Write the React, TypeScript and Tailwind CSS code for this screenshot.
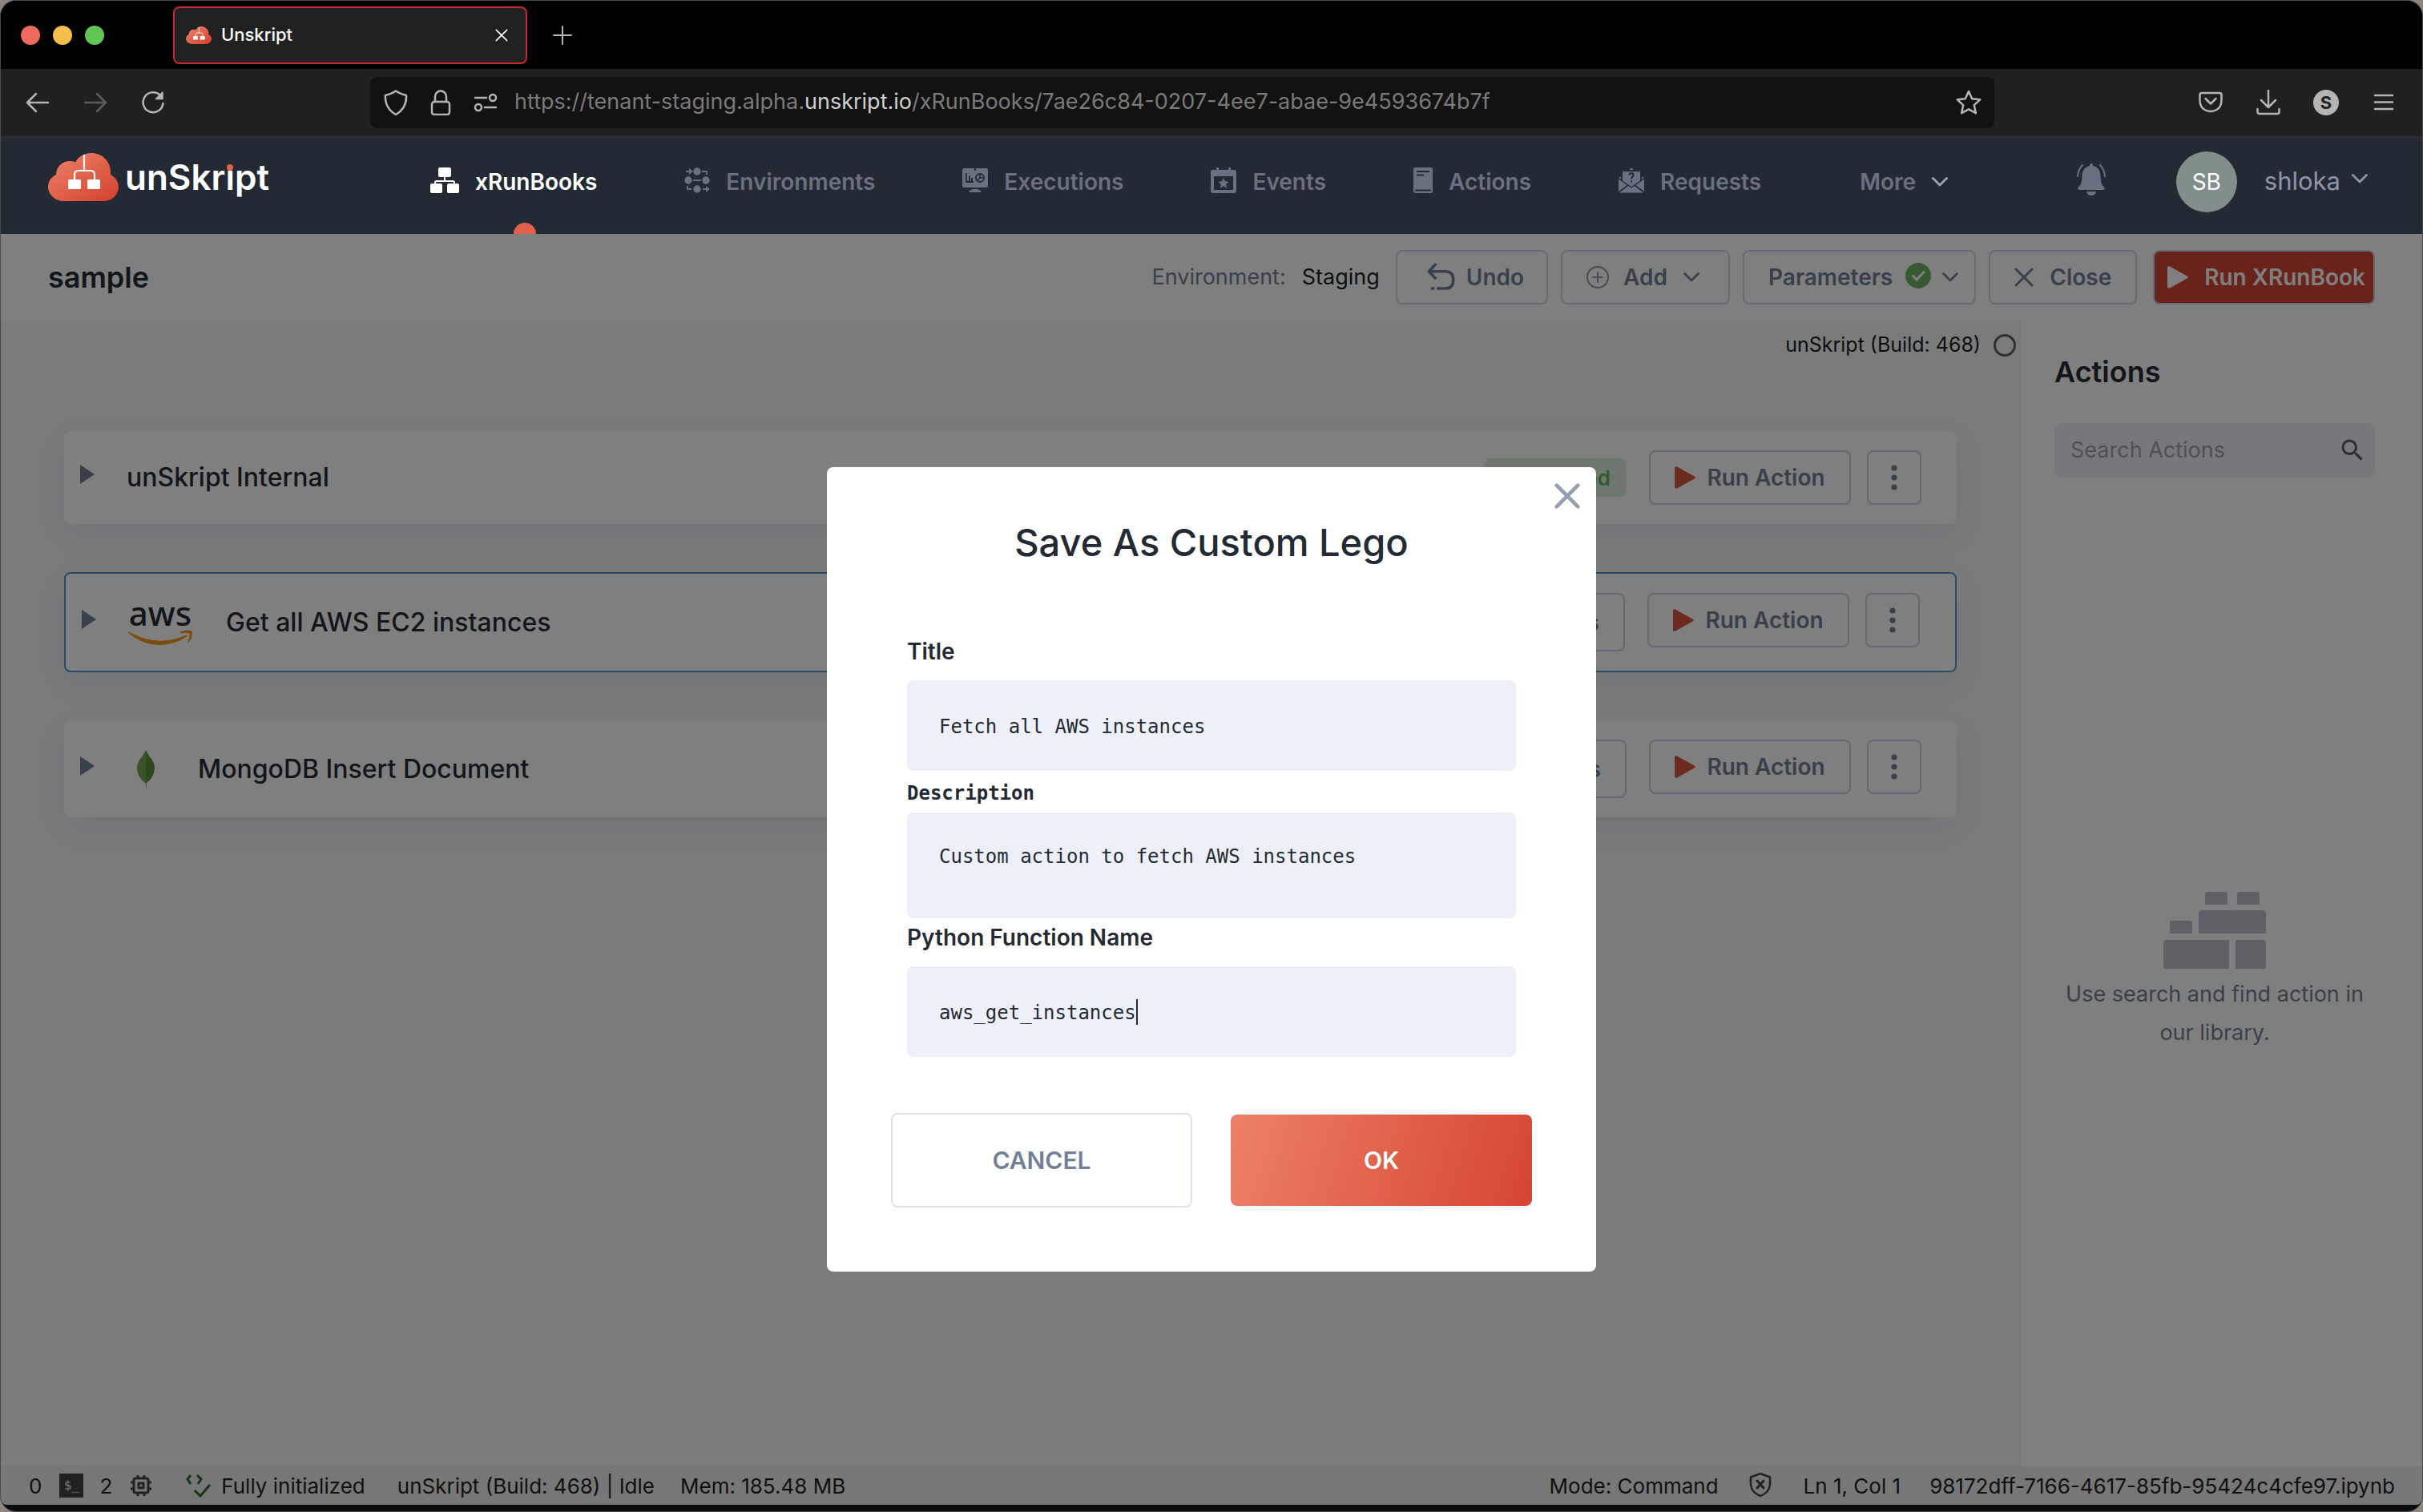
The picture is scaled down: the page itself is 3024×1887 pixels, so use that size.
import React, { useState } from "react";

type IconProps = { className?: string };

function CloudLogo({ className, id }: { className?: string; id: string }) {
  return (
    <svg viewBox="0 0 88 60" className={className} aria-hidden="true">
      <defs>
        <linearGradient id={id} x1="0" y1="0" x2="1" y2="1">
          <stop offset="0.1" stopColor="#ec7d65" />
          <stop offset="0.9" stopColor="#d54733" />
        </linearGradient>
      </defs>
      <path
        fill={`url(#${id})`}
        d="M20 60C9 60 0 52 0 42c0-7 4-12 10-15C10 17 18 10 27 10c3 0 5 .5 7 1.500C38 4 46 0 54 0c13 0 24 10 24 23v4c6 3 10 9 10 15 0 10-8 18-19 18Z"
      />
      <path d="M45 2v20M33 34v-7q0-5 5-5h15q5 0 5 5v7" fill="none" stroke="#fff" strokeWidth="2.200" />
      <rect x="25" y="33" width="16" height="12" rx="1.500" fill="#fff" />
      <rect x="49" y="33" width="16" height="12" rx="1.500" fill="#fff" />
    </svg>
  );
}

const RunBooksIcon = ({ className }: IconProps) => (
  <svg viewBox="0 0 36 32" className={className} fill="currentColor" aria-hidden="true">
    <rect x="10" y="0" width="16" height="12" rx="2" />
    <rect x="0" y="20" width="15" height="12" rx="2" />
    <rect x="21" y="20" width="15" height="12" rx="2" />
    <path d="M18 11v6M6 21v-2q0-2 2-2h20q2 0 2 2v2" fill="none" stroke="currentColor" strokeWidth="2" />
  </svg>
);

const EnvironmentsIcon = ({ className }: IconProps) => (
  <svg viewBox="0 0 32 32" className={className} fill="currentColor" aria-hidden="true">
    <circle cx="16" cy="5" r="4.700" />
    <circle cx="5" cy="16" r="4.700" />
    <circle cx="27" cy="16" r="4.700" />
    <circle cx="16" cy="27" r="4.700" />
    <path d="M11 16h10M2 5h5M22 5h6v4M4 23v4h5M23 27h5" fill="none" stroke="currentColor" strokeWidth="2" />
    <path d="M6 1l5 4-5 4zM27 23l5 4-5 4z" />
  </svg>
);

const ExecutionsIcon = ({ className }: IconProps) => (
  <svg viewBox="0 0 32 32" className={className} fill="currentColor" aria-hidden="true">
    <path d="M3 1h12v3h2V1h12q3 0 3 3v18q0 3-3 3H3q-3 0-3-3V4q0-3 3-3Z" />
    <path d="M12 27h8v1.500h3V31H9v-2.500h3z" />
    <path d="M5 7v11h9M9 10v7M12 13v4" fill="none" stroke="#242a34" strokeWidth="1.800" />
    <circle cx="22" cy="13" r="5" fill="none" stroke="#242a34" strokeWidth="1.800" />
    <path d="M22 8v5h5M22 13l-3.500 4" fill="none" stroke="#242a34" strokeWidth="1.500" />
  </svg>
);

const EventsIcon = ({ className }: IconProps) => (
  <svg viewBox="0 0 32 32" className={className} fill="currentColor" aria-hidden="true">
    <path fillRule="evenodd" d="M7 0h3v3h12V0h3v3h4q3 0 3 3v23q0 3-3 3H3q-3 0-3-3V6q0-3 3-3h4ZM4 11v17h24V11Z" />
    <path d="M16 13l2 4.300 4.600.5-3.400 3.200.9 4.700-4.100-2.400-4.100 2.400.9-4.700-3.400-3.200 4.600-.5Z" />
  </svg>
);

const ActionsIcon = ({ className }: IconProps) => (
  <svg viewBox="0 0 24 32" className={className} fill="currentColor" aria-hidden="true">
    <path d="M2 0h20q2 0 2 2v28q0 2-2 2H3q-3 0-3-3V2q0-2 2-2Z" />
    <path d="M4 5h16M4 9.500h9M2 28.500h20" stroke="#242a34" strokeWidth="1.800" />
  </svg>
);

const RequestsIcon = ({ className }: IconProps) => (
  <svg viewBox="0 0 32 32" className={className} fill="currentColor" aria-hidden="true">
    <path d="M13 3l3-2.500L19 3zM5 5h22v11.500L16 24 5 16.500ZM3 11v3.500l-2.500-1.500zM29 11v3.500l2.500-1.500z" />
    <path d="M0 14.500l10.500 7.500L0 30ZM32 14.500L21.500 22 32 30ZM1 31.500L12 23l4 2.500 4-2.500 11 8.500z" />
    <path d="M13.500 9.500q0-2.500 2.500-2.500t2.500 2.500q0 1.500-1.500 2.500-1 .8-1 2.500M16 16.500v2" fill="none" stroke="#242a34" strokeWidth="2" />
  </svg>
);

const BellIcon = ({ className }: IconProps) => (
  <svg viewBox="0 0 36 40" className={className} fill="currentColor" aria-hidden="true">
    <path d="M18 0q2 0 2 3 9 2 9.500 12 .2 8 2 11.500l3 3.500q1 3-2 3H3.500q-3 0-2-3l3-3.500q1.800-3.500 2-11.500Q7 5 16 3q0-3 2-3Z" />
    <path d="M12 35h12q-1 5-6 5t-6-5Z" />
    <path d="M7 2Q1.500 8 1 16M29 2q5.500 6 6 14" fill="none" stroke="currentColor" strokeWidth="2" strokeLinecap="round" />
  </svg>
);

const Chevron = ({ className }: IconProps) => (
  <svg viewBox="0 0 20 12" className={className} fill="none" stroke="currentColor" strokeWidth="2.800" strokeLinecap="round" strokeLinejoin="round" aria-hidden="true">
    <path d="M1.500 1.500L10 10l8.500-8.500" />
  </svg>
);

const Play = ({ className }: IconProps) => (
  <svg viewBox="0 0 26 28" className={className} fill="currentColor" aria-hidden="true">
    <path d="M0 2.500Q0-.8 3 .6L24.500 12.500q2.500 1.500 0 3L3 27.400Q0 28.800 0 25.500Z" />
  </svg>
);

const Cross = ({ className, width = 3 }: { className?: string; width?: number }) => (
  <svg viewBox="0 0 24 24" className={className} fill="none" stroke="currentColor" strokeWidth={width} strokeLinecap="round" aria-hidden="true">
    <path d="M2 2l20 20M22 2L2 22" />
  </svg>
);

function LineIcon({ className, children, box = "0 0 32 32" }: { className?: string; children: React.ReactNode; box?: string }) {
  return (
    <svg viewBox={box} className={className} fill="none" stroke="currentColor" strokeWidth="2.500" strokeLinecap="round" strokeLinejoin="round" aria-hidden="true">
      {children}
    </svg>
  );
}

function TabStrip() {
  return (
    <header className="flex h-[85px] items-center bg-black pl-[25px]">
      <div className="flex gap-4">
        <span className="size-6 rounded-full bg-[#ec6a5e]" />
        <span className="size-6 rounded-full bg-[#f4bf4f]" />
        <span className="size-6 rounded-full bg-[#61c554]" />
      </div>
      <div className="ml-[86px] flex h-18 w-[442px] items-center rounded-lg border-2 border-[#c9272f] bg-[#212121] pr-[22px] pl-3.5 text-[22px] font-medium text-[#fbfbfe]">
        <CloudLogo id="tabCloud" className="h-[22px] w-8" />
        <span className="ml-3">Unskript</span>
        <button aria-label="Close tab" className="ml-auto">
          <Cross width={2.5} className="size-4" />
        </button>
      </div>
      <button aria-label="New tab" className="ml-8 text-[#b5b5b8]">
        <LineIcon className="size-6" box="0 0 24 24">
          <path d="M12 1v22M1 12h22" strokeWidth="2" />
        </LineIcon>
      </button>
    </header>
  );
}

function AddressBar() {
  return (
    <div className="flex h-[83px] items-center bg-[#202020] pr-8 pl-[30px] text-[#b4b4b4]">
      <div className="flex w-[431px] gap-10">
        <button aria-label="Back">
          <LineIcon className="size-8">
            <path d="M29 16H3M14 5L3 16l11 11" />
          </LineIcon>
        </button>
        <button aria-label="Forward" className="text-[#5c5c5c]">
          <LineIcon className="size-8">
            <path d="M3 16h26M18 5l11 11-11 11" />
          </LineIcon>
        </button>
        <button aria-label="Reload">
          <LineIcon className="size-8">
            <path d="M28.500 17A12.500 12.500 0 1 1 25 7" />
            <path d="M28 3v8.500h-8.500z" fill="currentColor" strokeWidth="1.500" />
          </LineIcon>
        </button>
      </div>
      <div className="flex h-16 flex-1 items-center rounded-lg bg-[#121212] pr-4 pl-4">
        <LineIcon className="size-8">
          <path d="M16 1.500Q21 5 29 7q1 16-13 24Q2 23 3 7q8-2 13-5.500Z" />
        </LineIcon>
        <LineIcon className="ml-6 size-8">
          <rect x="5" y="15" width="22" height="16" rx="3" />
          <path d="M9 15V8.500a7 7 0 0 1 14 0V15" />
        </LineIcon>
        <LineIcon className="ml-6 size-8">
          <path d="M3 10h14M15 22h14" />
          <circle cx="25" cy="10" r="4" />
          <circle cx="7" cy="22" r="4" />
        </LineIcon>
        <div role="textbox" aria-label="Address" className="ml-5 flex-1 text-[27px] whitespace-nowrap text-[#7a7a7a]">
          https://tenant-staging.alpha.<span className="text-[#d0d0d0]">unskript.io</span>/xRunBooks/7ae26c84-0207-4ee7-abae-9e4593674b7f
        </div>
        <button aria-label="Bookmark this page">
          <LineIcon className="size-8">
            <path d="M16 2l4.200 9.200 10 1.100-7.400 6.900 2.100 10L16 24.300 7.100 29.200l2.100-10-7.400-6.900 10-1.100Z" />
          </LineIcon>
        </button>
      </div>
      <div className="ml-[254px] flex items-center gap-10">
        <button aria-label="Save to Pocket">
          <LineIcon className="size-8">
            <path d="M5 4h22q2.500 0 2.500 2.500v7Q29 26 16 27 3 26 2.500 13.500v-7Q2.500 4 5 4Z" />
            <path d="M9.500 11l6.500 6.500 6.500-6.500" />
          </LineIcon>
        </button>
        <button aria-label="Downloads">
          <LineIcon className="size-8">
            <path d="M16 1v20M7 13l9 9 9-9M2.500 24v3.500q0 2.500 2.500 2.500h22q2.500 0 2.500-2.500V24" />
          </LineIcon>
        </button>
        <button aria-label="Account" className="size-8 rounded-full bg-[#b4b4b4] text-[22px] leading-8 font-bold text-[#202020]">
          S
        </button>
        <button aria-label="Menu">
          <LineIcon className="size-8">
            <path d="M5 7h22M5 15.500h22M5 24h22" />
          </LineIcon>
        </button>
      </div>
    </div>
  );
}

const navItems = [
  { label: "xRunBooks", Icon: RunBooksIcon, size: "h-8 w-9", active: true },
  { label: "Environments", Icon: EnvironmentsIcon, size: "size-8" },
  { label: "Executions", Icon: ExecutionsIcon, size: "size-8" },
  { label: "Events", Icon: EventsIcon, size: "size-8" },
  { label: "Actions", Icon: ActionsIcon, size: "h-8 w-6" },
  { label: "Requests", Icon: RequestsIcon, size: "size-8" },
];

function MainNav() {
  return (
    <div className="flex h-[123px] items-stretch bg-[#242a34] pr-[68px] pl-[59px] text-[28px] font-semibold text-[#6b7080]">
      <a href="#home" className="flex w-[477px] items-center gap-2 pb-5 text-[44px] leading-none text-white">
        <CloudLogo id="brandCloud" className="h-15 w-[88px]" />
        <span>
          unSkr
          <span className="relative">
            ı<span className="absolute top-[11px] left-1/2 size-2 -translate-x-1/2 rounded-full bg-[#e2604b]" />
          </span>
          pt
        </span>
      </a>
      <nav className="flex items-stretch gap-[109px]">
        {navItems.map(({ label, Icon, size, active }) => (
          <a key={label} href={`#${label}`} className={`relative flex items-center gap-5 pb-2 ${active ? "text-white" : ""}`}>
            <Icon className={`${size} mb-1`} />
            {label}
            {active && (
              <span className="absolute bottom-0 left-1/2 h-3.5 w-7 rounded-t-full bg-[#e2604b]" />
            )}
          </a>
        ))}
        <button className="ml-3.5 flex items-center gap-5 pb-2">
          More
          <Chevron className="h-3 w-5 text-[#9aa1b5]" />
        </button>
      </nav>
      <div className="ml-auto flex items-center pb-2">
        <button aria-label="Notifications">
          <BellIcon className="mb-1.5 h-10 w-9" />
        </button>
        <span className="ml-[88px] flex size-[76px] items-center justify-center rounded-full bg-[#818e8c] font-normal text-white">SB</span>
        <button className="ml-[34px] flex items-center gap-3.5 text-[31px] font-normal text-[#8e95a8]">
          shloka
          <Chevron className="mb-2 h-3 w-5" />
        </button>
      </div>
    </div>
  );
}

function RunbookHeader() {
  const button = "flex h-17 items-center rounded-lg border-2 border-[#d0d6ea]";
  return (
    <div className="flex h-27 items-center bg-white pr-[59px] pl-[59px] text-[28px] font-semibold text-[#718096]">
      <h1 className="text-[36px] text-[#242a34]">sample</h1>
      <p className="mr-5 ml-auto text-[27px] font-normal">
        Environment:<span className="ml-5 text-[#1a1f28]">Staging</span>
      </p>
      <div className="flex gap-4">
        <button className={`${button} pr-7 pl-9`}>
          <LineIcon className="mr-3.5 size-9">
            <path d="M10 2L3 9.500 10 17M4 9.500h17q9 0 9 9.500t-9 9.500h-8" strokeWidth="3.200" />
            <path d="M6.500 28.500h1" strokeWidth="3.200" strokeLinecap="square" />
          </LineIcon>
          Undo
        </button>
        <button className={`${button} pr-9 pl-7`}>
          <LineIcon className="mr-4 size-8 opacity-80">
            <circle cx="16" cy="16" r="13" strokeWidth="2" />
            <path d="M16 10v12M10 16h12" strokeWidth="2" />
          </LineIcon>
          Add
          <Chevron className="ml-5 h-3 w-5" />
        </button>
        <button className={`${button} pr-5 pl-[30px]`}>
          Parameters
          <svg viewBox="0 0 32 32" className="mb-1 ml-4 size-8" aria-hidden="true">
            <circle cx="16" cy="16" r="16" fill="#72b268" />
            <path d="M9.500 16.500l4.500 4.500 9-9.500" fill="none" stroke="#fff" strokeWidth="3" strokeLinecap="round" strokeLinejoin="round" />
          </svg>
          <Chevron className="ml-3.5 h-3 w-5" />
        </button>
        <button className={`${button} px-[30px]`}>
          <Cross className="mr-5 size-6" />
          Close
        </button>
        <button className={`${button} ml-1 bg-[#d44634] pr-2.5 pl-4 text-white`}>
          <Play className="mr-5 h-7 w-[26px]" />
          Run XRunBook
        </button>
      </div>
    </div>
  );
}

const AwsLogo = () => (
  <span className="mr-[42px] ml-10 flex h-14 w-20 flex-col items-center font-['Noto_Sans'] text-[42px] leading-8 font-medium text-[#242a34]">
    aws
    <svg viewBox="0 0 80 18" className="mt-1 h-[22px] w-20 shrink-0" aria-hidden="true">
      <path d="M0 2.500q.8-1.500 3 0Q37 21 71 6q3-.8 2 1.500Q58 18 38 18 16 17 0 2.500Z" fill="#f7981d" />
      <path d="M65 1.500Q73-1.500 79.500.8 81.500 7 75.500 14.500q-1.500.5-1-1Q77 7 76.500 3.500 72 2.500 65.500 3.200q-1.500-.7-.5-1.700Z" fill="#f7981d" />
    </svg>
  </span>
);

const MongoLogo = () => (
  <svg viewBox="0 0 22 48" className="mr-[54px] ml-[53px] h-12 w-[22px]" aria-hidden="true">
    <path d="M10.500 40h1.200l.6 8h-1.200z" fill="#b8bfb0" />
    <path d="M11 0Q8 6 4 11q-4 6-4 12 1 12 11 19Z" fill="#78a653" />
    <path d="M11 0q2.500 6 7 11 4 6 4 12-1 12-11 19Z" fill="#569236" />
  </svg>
);

const outlined = "flex items-center rounded-lg border-2 border-[#ccd2e6]";

type Card = { title: string; logo?: React.ReactNode; completed?: boolean; selected?: boolean };

const cards: Card[] = [
  { title: "unSkript Internal", completed: true },
  { title: "Get all AWS EC2 instances", logo: <AwsLogo />, selected: true },
  { title: "MongoDB Insert Document", logo: <MongoLogo /> },
];

function ActionCard({ title, logo, completed, selected }: Card) {
  return (
    <article
      className={`flex rounded-lg bg-white py-6 pr-[44px] pl-5 text-[28px] font-semibold text-[#718096] shadow-[0_12px_40px_rgba(40,50,70,0.08)] ${
        selected ? "border-2 border-[#5098d0]" : ""
      }`}
    >
      <div className="flex flex-1 items-center">
        <button aria-label={`Expand ${title}`}>
          <svg viewBox="0 0 18 24" className="mb-2 h-6 w-[18px]" fill="currentColor" aria-hidden="true">
            <path d="M0 0l18 12L0 24z" />
          </svg>
        </button>
        {logo ?? <span className="w-10" />}
        <h2 className="text-[32px] font-medium text-[#242a34]">{title}</h2>
      </div>
      <div className="flex items-start">
        {completed ? (
          <span className="mt-2.5 mr-7 flex h-12 items-center rounded-lg bg-[#dcefdc] px-5 text-[26px] text-[#65b35f]">Completed</span>
        ) : (
          <button className={`${outlined} mr-7 h-[73px] px-[30px]`}>Configurations</button>
        )}
        <button className={`${outlined} h-17 w-[252px] justify-center gap-3.5`}>
          <Play className="h-7 w-[26px] text-[#d85443]" />
          Run Action
        </button>
        <button aria-label="More options" className={`${outlined} ml-5 h-17 w-17 justify-center`}>
          <svg viewBox="0 0 8 32" className="h-8 w-2" fill="currentColor" aria-hidden="true">
            <circle cx="4" cy="4" r="3.600" />
            <circle cx="4" cy="16" r="3.600" />
            <circle cx="4" cy="28" r="3.600" />
          </svg>
        </button>
      </div>
    </article>
  );
}

function ActionsPanel() {
  return (
    <aside className="flex w-[501px] flex-col bg-white pr-[59px] pl-[42px]">
      <h2 className="mt-10 text-[36px] leading-12 font-semibold text-[#242a34]">Actions</h2>
      <div className="mt-10 flex h-17 items-center rounded-lg bg-[#eef0f8] pr-2.5 pl-5">
        <input aria-label="Search Actions" placeholder="Search Actions" className="min-w-0 flex-1 text-[27px] outline-none placeholder:text-[#a0a1a6]" />
        <svg viewBox="0 0 24 24" className="size-9 text-[#5c5c5c]" fill="currentColor" aria-hidden="true">
          <path d="M15.500 14h-.79l-.28-.27A6.470 6.470 0 0 0 16 9.500 6.500 6.500 0 1 0 9.500 16c1.610 0 3.090-.59 4.230-1.570l.27.28v.79l5 4.990L20.490 19l-4.990-5zm-6 0C7.010 14 5 11.990 5 9.500S7.010 5 9.500 5 14 7.010 14 9.500 11.990 14 9.500 14z" />
        </svg>
      </div>
      <div className="mt-[517px] flex flex-col items-center">
        <svg viewBox="0 0 128 96" className="h-24 w-32" fill="#bec0cc" aria-hidden="true">
          <path d="M52 16V3q0-3 3-3h22q3 0 3 3v13zM92 16V3q0-3 3-3h22q3 0 3 3v13zM44 52V27q0-4 4-4h76q4 0 4 4v25zM8 52V39q0-3 3-3h22q3 0 3 3v13zM82 60v36H4q-4 0-4-4V64q0-4 4-4zM90 60h34q4 0 4 4v28q0 4-4 4H90z" />
        </svg>
        <p className="mt-2 text-center text-[27px] leading-12 text-[#718096]">Use search and find action in our library.</p>
      </div>
    </aside>
  );
}

function StatusBar() {
  return (
    <footer className="flex h-12 items-center bg-[#eeeeee] pr-[34px] pl-[35px] text-[26px] text-[#212121]">
      <span>0</span>
      <span className="ml-[22px] flex size-[30px] items-center justify-center bg-[#424242] font-['DejaVu_Sans_Mono'] text-base leading-none text-[#eeeeee]">$_</span>
      <span className="ml-5">2</span>
      <LineIcon className="ml-[22px] size-7 text-[#424242]" box="0 0 28 28">
        <rect x="5" y="5" width="18" height="18" rx="2" strokeWidth="3" />
        <rect x="11" y="11" width="6" height="6" strokeWidth="3" />
        <path d="M10 1v4M18 1v4M10 23v4M18 23v4M1 10h4M1 18h4M23 10h4M23 18h4" strokeWidth="3" strokeLinecap="butt" />
      </LineIcon>
      <LineIcon className="ml-[42px] size-8 text-[#2e6b2e]">
        <path d="M6 3L2 8l4 6M14 3l5 5-4 6M11 22l7 7L30 15" strokeWidth="3" strokeLinecap="butt" strokeLinejoin="miter" />
      </LineIcon>
      <span className="ml-3">Fully initialized</span>
      <span className="ml-10">unSkript (Build: 468) | Idle</span>
      <span className="ml-8">Mem: 185.48 MB</span>
      <span className="ml-auto">Mode: Command</span>
      <LineIcon className="mr-[38px] ml-9 size-8 text-[#424242]">
        <path d="M16 1l12 4.500v9Q27 25 16 29 5 25 4 14.500v-9Z" />
        <path d="M12 10l8 9M20 10l-8 9" strokeWidth="3" />
      </LineIcon>
      <span>Ln 1, Col 1</span>
      <span className="ml-9">98172dff-7166-4617-85fb-95424c4cfe97.ipynb</span>
    </footer>
  );
}

function SaveDialog() {
  const [title, setTitle] = useState("Fetch all AWS instances");
  const [description, setDescription] = useState("Custom action to fetch AWS instances");
  const [fn, setFn] = useState("aws_get_instances");
  const mono = "font-['DejaVu_Sans_Mono',monospace] text-2xl";
  return (
    <div className="absolute inset-0 flex items-center justify-center bg-black/50">
      <form role="dialog" aria-labelledby="dialog-title" className="relative flex w-[960px] flex-col rounded-lg bg-white px-20 pt-[62px] pb-20 text-[28px] text-[#242a34]">
        <button type="button" aria-label="Close dialog" className="absolute top-5 right-5 text-[#94a0b2]">
          <Cross width={3.5} className="size-8" />
        </button>
        <h2 id="dialog-title" className="text-center text-[47px] leading-16 font-medium">
          Save As Custom Lego
        </h2>
        <div className="mt-[84px] flex flex-col px-5">
          <label htmlFor="title" className="leading-10 font-semibold">
            Title
          </label>
          <input id="title" value={title} onChange={(e) => setTitle(e.target.value)} className={`${mono} mt-4 h-[113px] rounded-lg bg-[#edf0f8] px-10 pt-0.5 outline-none`} />
          <label htmlFor="description" className={`${mono} mt-2 leading-10 font-bold`}>
            Description
          </label>
          <textarea id="description" value={description} onChange={(e) => setDescription(e.target.value)} className={`${mono} mt-1 h-[132px] resize-none rounded-lg bg-[#edf0f8] px-10 pt-[41px] leading-7 outline-none`} />
          <label htmlFor="fn" className="mt-1 leading-10 font-semibold">
            Python Function Name
          </label>
          <div className={`${mono} mt-4 flex h-[113px] items-center rounded-lg bg-[#edf0f8] px-10`}>
            <input id="fn" value={fn} onChange={(e) => setFn(e.target.value)} className="w-[17ch] pt-0.5 outline-none" />
            <span className="h-8 w-0.5 bg-[#242a34]" />
          </div>
        </div>
        <div className="mt-[70px] grid grid-cols-2 items-center gap-12 text-[30px] font-semibold">
          <button type="button" className="h-[118px] rounded-lg border-2 border-[#dde3f0] text-[#718096]">
            CANCEL
          </button>
          <button type="button" className="h-[114px] rounded-lg bg-[linear-gradient(107deg,#ed806a,#d54531)] text-white">
            OK
          </button>
        </div>
      </form>
    </div>
  );
}

export default function App() {
  return (
    <div className="bg-[#8f8580]">
      <div className="flex min-h-screen flex-col overflow-hidden rounded-[20px] border border-[#4b4b4b] bg-[#0b0c0d] font-['Inter',sans-serif]">
        <TabStrip />
        <AddressBar />
        <MainNav />
        <div className="relative mb-2 flex flex-1 flex-col overflow-hidden rounded-b-lg">
          <RunbookHeader />
          <div className="flex flex-1">
            <main className="flex-1 bg-[#f4f6fa] pr-20 pl-[79px]">
              <div className="-mr-[74px] flex h-[62px] items-center justify-end gap-4 text-[25px] text-[#1a1a1a]">
                unSkript (Build: 468)
                <span className="size-7 rounded-full border-3 border-[#616161]" />
              </div>
              <div className="mt-19 flex flex-col gap-15">
                {cards.map((card) => (
                  <ActionCard key={card.title} {...card} />
                ))}
              </div>
            </main>
            <ActionsPanel />
          </div>
          <StatusBar />
          <SaveDialog />
        </div>
      </div>
    </div>
  );
}
